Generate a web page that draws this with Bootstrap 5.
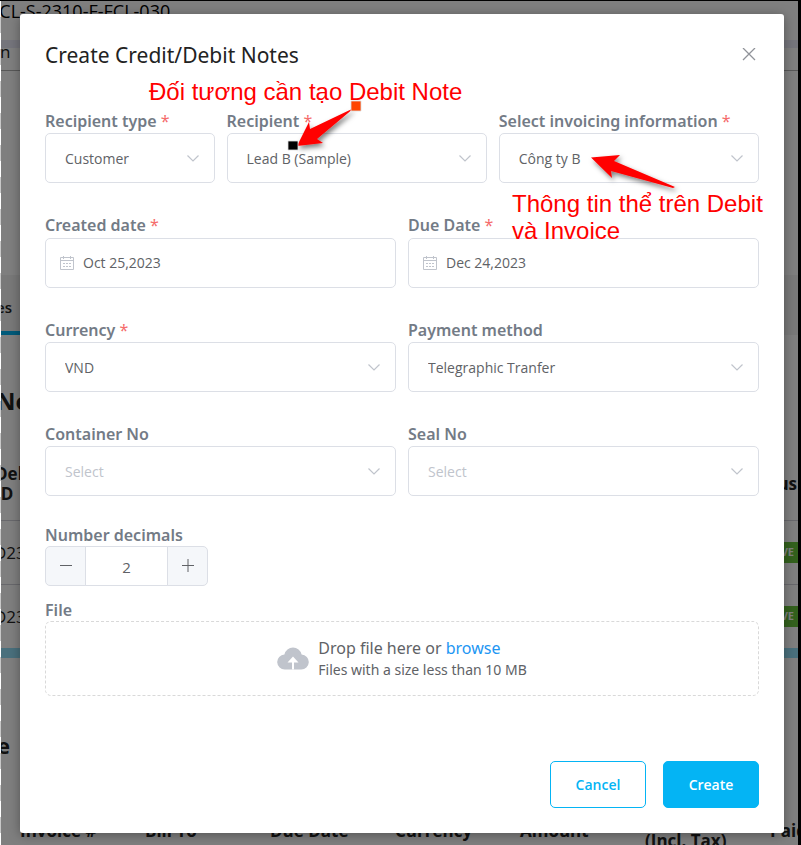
<!DOCTYPE html>
<html lang="en">
<head>
<meta charset="utf-8">
<meta name="viewport" content="width=device-width, initial-scale=1">
<title>Create Credit/Debit Notes</title>
<link rel="stylesheet" href="https://cdn.jsdelivr.net/npm/bootstrap@5.3.0/dist/css/bootstrap.min.css">
<style>
body{font-family:"Open Sans","Noto Sans",sans-serif;font-size:14px;line-height:20px;color:#606266;background:#fff}
.shell{border-top:1px solid #000;border-right:3px solid #000;padding:13px 14px 12px 20px}
/* page behind the dialog */
.backpage{inset:0;color:#222;font-size:17px;line-height:20px}
.backpage::before{content:"";position:absolute;z-index:3;inset:0 auto 0 0;width:1px;background:repeating-linear-gradient(#fff 0 16px,#c8c8c8 16px 32px)}
.shade{inset:0 0 0 1px;background:rgba(0,0,0,.5)}
.bp-code{height:39px;margin-left:-10px;color:#000;font-size:18px;white-space:nowrap}
.bp-strip{height:8px;background:#ebebf8}
.bp-crumb{height:23px;border-bottom:1px solid #b0b0b0;line-height:8px}
.bp-blank{height:204px}
.bp-tabs{height:60px;background:#f3f3f3;padding-top:22px;font-size:15px;font-weight:600}
.bp-tabs span{display:block;width:140px;height:38px;margin-left:-4px;border-bottom:4px solid #00b5f5}
.bp-title{height:117px;padding-top:50px;font-size:24px;line-height:32px;font-weight:700;margin-left:-4px}
.bp-head{height:68px;padding-bottom:4px;font-weight:700;margin-left:-5px;padding-right:1px}
.bp-row{height:64px;border-top:1px solid #d0d0d8}
.bp-row>:first-child{margin-left:-6px}
.bp-badge{background:#67c23a;color:#fff;font-size:11px;font-weight:700;width:54px;height:21px;text-align:right;padding-right:4px}
.bp-scroll{height:10px;background:#94e0fa}
.bp-sub{height:153px;padding-top:73px;font-size:22px;line-height:28px;font-weight:700;margin-left:-3px}
.bp-cols{padding-left:20px;font-weight:700}
.bp-cols>div{flex:0 0 125px}
/* dialog */
.dlg{border:0;border-radius:3px;background:#fff;box-shadow:0 2px 12px rgba(0,0,0,.35)}
.dlg .modal-header{padding:24px 25px;border-color:#ebeef5;height:81px}
.dlg h1{font-family:"Noto Sans",sans-serif;font-size:21px;line-height:32px;color:#222}
.dlg .modal-body{padding:14px 25px 0}
.dlg .modal-footer{padding:65px 25px 25px;gap:17px;border:0}
.dlg .row{--bs-gutter-x:12px;margin-bottom:30px}
.dlg .row.last-row{margin-bottom:29px}
.x-btn{width:20px;height:20px;color:#909399}
.f-label{display:block;font-family:"Noto Sans",sans-serif;font-size:16px;line-height:24px;font-weight:600;color:#737b86}
.f-label.tight{line-height:21px}
.req{color:#f56c6c;font-weight:400}
.form-select{height:50px;border-color:#dcdfe6;border-radius:5px;padding:0 36px 0 19px;font-size:14px;color:#606266;
--bs-form-select-bg-img:url("data:image/svg+xml,%3csvg xmlns='http://www.w3.org/2000/svg' viewBox='0 0 14 14'%3e%3cpath fill='none' stroke='%23c0c4cc' stroke-width='1.2' d='M1.5 4.5 7 10l5.5-5.5'/%3e%3c/svg%3e");
background-position:right 14px center;background-size:14px 14px}
.form-select.empty{color:#c0c4cc}
.date-box{height:50px;margin-top:1px;border:1px solid #dcdfe6;border-radius:5px;padding:0 14px;color:#c0c4cc;gap:9px}
.date-box input{border:0;outline:0;padding:0;min-width:0;color:#606266}
.stepper{width:163px;height:40px;margin-bottom:14px}
.stepper .btn{width:41px;padding:0;background:#f5f7fa;border:1px solid #dcdfe6;color:#606266;border-radius:5px;line-height:0}
.stepper .form-control{border-color:#dcdfe6;color:#606266;font-size:15px;padding:3px 0 0;text-align:center}
.drop{font-family:"Noto Sans",sans-serif;border:1px dashed #d9d9d9;border-radius:6px;height:75px;gap:9px;padding-bottom:2px}
.drop-main{font-size:16px;line-height:24px}
.drop a{color:#2196f3}
.act{height:47px;min-width:96px;border-radius:5px;font-size:14px;font-weight:600;border:1px solid #04b4f4;margin:0}
.act-line{color:#04b4f4;background:#fff}
.act-fill{color:#fff;background:#04b4f4}
/* hand-made notes laid over the dialog */
.note{color:#f00;font-family:"Liberation Sans",Arial,sans-serif;font-size:24px;line-height:27px;z-index:5}
.note-a{left:129px;top:64px}
.note-b{left:492px;top:176px;width:270px}
.arrow-a{left:260px;top:78px;z-index:6}
.arrow-b{left:566px;top:132px;z-index:6}
</style>
<script src="https://cdn.jsdelivr.net/npm/bootstrap@5.3.0/dist/js/bootstrap.bundle.min.js"></script>
</head>
<body>
<div class="shell position-relative overflow-hidden min-vh-100">
  <div class="backpage position-absolute overflow-hidden" aria-hidden="true">
    <div class="bp-code">FCL-S-2310-F-FCL-030</div>
    <div class="bp-strip"></div>
    <div class="bp-crumb">n</div>
    <div class="bp-blank"></div>
    <div class="bp-tabs"><span>es</span></div>
    <div class="bp-title">No</div>
    <div class="bp-head d-flex justify-content-between align-items-center"><div>Debit<br>ID</div><div>us</div></div>
    <div class="bp-row d-flex justify-content-between align-items-center"><span>D23</span><span class="bp-badge">VE</span></div>
    <div class="bp-row d-flex justify-content-between align-items-center"><span>D23</span><span class="bp-badge">VE</span></div>
    <div class="bp-scroll"></div>
    <div class="bp-sub">e</div>
    <div class="bp-cols d-flex align-items-center"><div>Invoice #</div><div>Bill To</div><div>Due Date</div><div>Currency</div><div>Amount</div><div>Amount<br>(Incl. Tax)</div><div>Paid</div></div>
    <div class="shade position-absolute"></div>
  </div>

  <main class="modal-content dlg position-relative" role="dialog" aria-labelledby="dlg-title">
    <div class="modal-header d-flex justify-content-between align-items-center">
      <h1 id="dlg-title" class="modal-title fw-normal">Create Credit/Debit Notes</h1>
      <button type="button" class="x-btn btn p-0 border-0 d-flex align-items-center justify-content-center" aria-label="Close">
        <svg width="14" height="14" viewBox="0 0 14 14" fill="none" stroke="currentColor" stroke-width="1.3"><path d="M1 0l12 12M13 0 1 12"/></svg>
      </button>
    </div>
    <div class="modal-body">
      <div class="row">
        <div class="col-3"><label class="f-label" for="rtype">Recipient type <span class="req">*</span></label>
          <select id="rtype" class="form-select"><option>Customer</option></select></div>
        <div class="col"><label class="f-label" for="rec">Recipient <span class="req">*</span></label>
          <select id="rec" class="form-select"><option>Lead B (Sample)</option></select></div>
        <div class="col"><label class="f-label text-nowrap" for="inv">Select invoicing information <span class="req">*</span></label>
          <select id="inv" class="form-select"><option>Công ty B</option></select></div>
      </div>
      <div class="row">
        <div class="col-6"><label class="f-label" for="cdate">Created date <span class="req">*</span></label>
          <div class="date-box d-flex align-items-center">
            <svg width="14" height="14" viewBox="0 0 14 14" fill="none" stroke="currentColor"><path d="M.5 1.500h13v12H.5zM.5 4.500h13M3.500 0v3M10.500 0v3M3 7.500h2M6 7.500h2M9 7.500h2M3 10.500h2M6 10.500h2M9 10.500h2"/></svg>
            <input id="cdate" class="flex-grow-1" type="text" value="Oct 25,2023"></div></div>
        <div class="col-6"><label class="f-label" for="ddate">Due Date <span class="req">*</span></label>
          <div class="date-box d-flex align-items-center">
            <svg width="14" height="14" viewBox="0 0 14 14" fill="none" stroke="currentColor"><path d="M.5 1.500h13v12H.5zM.5 4.500h13M3.500 0v3M10.500 0v3M3 7.500h2M6 7.500h2M9 7.500h2M3 10.500h2M6 10.500h2M9 10.500h2"/></svg>
            <input id="ddate" class="flex-grow-1" type="text" value="Dec 24,2023"></div></div>
      </div>
      <div class="row">
        <div class="col-6"><label class="f-label" for="cur">Currency <span class="req">*</span></label>
          <select id="cur" class="form-select"><option>VND</option></select></div>
        <div class="col-6"><label class="f-label" for="pay">Payment method</label>
          <select id="pay" class="form-select"><option>Telegraphic Tranfer</option></select></div>
      </div>
      <div class="row last-row">
        <div class="col-6"><label class="f-label" for="cont">Container No</label>
          <select id="cont" class="form-select empty"><option>Select</option></select></div>
        <div class="col-6"><label class="f-label" for="seal">Seal No</label>
          <select id="seal" class="form-select empty"><option>Select</option></select></div>
      </div>
      <label class="f-label tight" for="dec">Number decimals</label>
      <div class="stepper input-group flex-nowrap">
        <button type="button" class="btn" aria-label="Decrease"><svg width="14" height="14" viewBox="0 0 14 14" stroke="currentColor"><path d="M1 6.500h12"/></svg></button>
        <input id="dec" class="form-control" type="text" inputmode="numeric" value="2">
        <button type="button" class="btn" aria-label="Increase"><svg width="14" height="14" viewBox="0 0 14 14" stroke="currentColor"><path d="M1 6.500h12M7 0v13"/></svg></button>
      </div>
      <label class="f-label tight" for="file">File</label>
      <div class="drop d-flex align-items-center justify-content-center">
        <svg width="32" height="24" viewBox="0 0 32 24"><path fill="#c0c4cc" d="M8 23.500a7.500 7.500 0 0 1-.6-15A8.800 8.800 0 0 1 24.600 8.500a7.500 7.500 0 0 1-.6 15z"/><path fill="#fff" d="M16 10.500l5.500 6H17v7h-2v-7h-4.500z"/></svg>
        <div>
          <div class="drop-main">Drop file here or <a href="#file" class="text-decoration-none">browse</a></div>
          <div>Files with a size less than 10 MB</div>
        </div>
        <input id="file" type="file" class="visually-hidden">
      </div>
    </div>
    <div class="modal-footer d-flex justify-content-end">
      <button type="button" class="btn act act-line">Cancel</button>
      <button type="button" class="btn act act-fill">Create</button>
    </div>

    <div class="note note-a position-absolute text-nowrap" lang="vi">Đối tương cần tạo Debit Note</div>
    <div class="note note-b position-absolute" lang="vi">Thông tin thể trên Debit và Invoice</div>
    <svg class="arrow-a position-absolute" width="90" height="70" viewBox="280 92 90 70"><defs><filter id="sh" x="-30%" y="-30%" width="160%" height="170%"><feDropShadow dx="2" dy="3" stdDeviation="2.500" flood-opacity=".5"/></filter></defs>
      <path fill="red" filter="url(#sh)" d="M354 108 310 129 309 122 297 146 323 143 317 139z"/>
      <path fill="#ff4500" stroke="#ddd" stroke-width=".8" d="M351 101h10v10h-10z"/><path fill="#000" stroke="#ddd" stroke-width=".8" d="M288 141h10v9h-10z"/></svg>
    <svg class="arrow-b position-absolute" width="100" height="60" viewBox="586 146 100 60">
      <path fill="red" filter="url(#sh)" d="M591 157.500 620 155 614 161 675 187 673 188 611 171 612 178z"/></svg>
  </main>
</div>
</body>
</html>
